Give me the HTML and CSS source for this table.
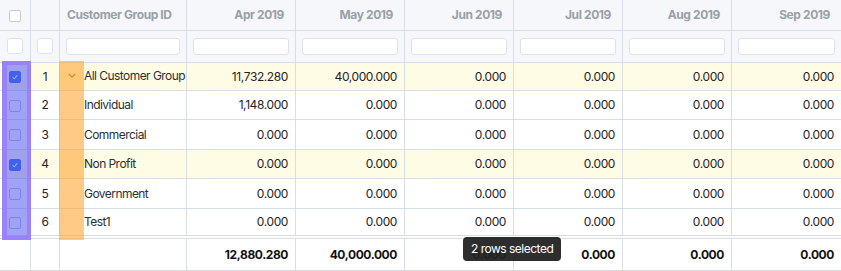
FILE: index.html
```html
<!DOCTYPE html>
<html>
<head>
<meta charset="utf-8">
<link rel="stylesheet" href="styles.css">
</head>
<body>
<div class="grid">
  <table class="tbl">
    <colgroup>
      <col class="c-sel"><col class="c-num"><col class="c-grp">
      <col class="c-m"><col class="c-m"><col class="c-m"><col class="c-m"><col class="c-m"><col class="c-last">
    </colgroup>
    <thead>
      <tr class="hdr">
        <th class="center"><span class="cb cb-hdr"></span></th>
        <th></th>
        <th class="left">Customer Group ID</th>
        <th>Apr 2019</th><th>May 2019</th><th>Jun 2019</th><th>Jul 2019</th><th>Aug 2019</th><th>Sep 2019</th>
      </tr>
      <tr class="flt">
        <th class="center"><span class="box"></span></th>
        <th class="center"><span class="box"></span></th>
        <th><span class="inp"></span></th>
        <th><span class="inp"></span></th><th><span class="inp"></span></th><th><span class="inp"></span></th><th><span class="inp"></span></th><th><span class="inp"></span></th><th><span class="inp"></span></th>
      </tr>
    </thead>
    <tbody>
      <tr class="sel r1">
        <td class="center"><span class="cb checked"><svg viewBox="0 0 10 10" width="8" height="8"><path d="M2 5.2 L4.2 7.2 L8 2.8" fill="none" stroke="#fff" stroke-width="1.4"/></svg></span></td>
        <td class="center">1</td>
        <td class="grp"><span class="tog"><svg viewBox="0 0 10 6" width="8" height="5"><path d="M1 1 L5 5 L9 1" fill="none" stroke="#b35f05" stroke-width="1.6"/></svg></span>All Customer Group</td>
        <td>11,732.280</td><td>40,000.000</td><td>0.000</td><td>0.000</td><td>0.000</td><td>0.000</td>
      </tr>
      <tr class="r2">
        <td class="center"><span class="cb"></span></td>
        <td class="center">2</td>
        <td class="grp"><span class="tog"></span>Individual</td>
        <td>1,148.000</td><td>0.000</td><td>0.000</td><td>0.000</td><td>0.000</td><td>0.000</td>
      </tr>
      <tr class="r3">
        <td class="center"><span class="cb"></span></td>
        <td class="center">3</td>
        <td class="grp"><span class="tog"></span>Commercial</td>
        <td>0.000</td><td>0.000</td><td>0.000</td><td>0.000</td><td>0.000</td><td>0.000</td>
      </tr>
      <tr class="sel r4">
        <td class="center"><span class="cb checked"><svg viewBox="0 0 10 10" width="8" height="8"><path d="M2 5.2 L4.2 7.2 L8 2.8" fill="none" stroke="#fff" stroke-width="1.4"/></svg></span></td>
        <td class="center">4</td>
        <td class="grp"><span class="tog"></span>Non Profit</td>
        <td>0.000</td><td>0.000</td><td>0.000</td><td>0.000</td><td>0.000</td><td>0.000</td>
      </tr>
      <tr class="r5">
        <td class="center"><span class="cb"></span></td>
        <td class="center">5</td>
        <td class="grp"><span class="tog"></span>Government</td>
        <td>0.000</td><td>0.000</td><td>0.000</td><td>0.000</td><td>0.000</td><td>0.000</td>
      </tr>
      <tr class="r6">
        <td class="center"><span class="cb"></span></td>
        <td class="center">6</td>
        <td class="grp"><span class="tog"></span>Test1</td>
        <td>0.000</td><td>0.000</td><td>0.000</td><td>0.000</td><td>0.000</td><td>0.000</td>
      </tr>
    </tbody>
    <tfoot>
      <tr class="ftr">
        <td></td><td></td><td></td>
        <td>12,880.280</td><td>40,000.000</td><td>0.000</td><td>0.000</td><td>0.000</td><td>0.000</td>
      </tr>
    </tfoot>
  </table>
  <div class="hl hl-sel"></div>
  <div class="hl hl-grp"></div>
  <div class="tip">2 rows selected</div>
</div>
</body>
</html>
```

FILE: styles.css
```css
html, body {
  margin: 0;
  padding: 0;
  background: #fff;
}
body {
  font-family: Inter, "Noto Sans", "Liberation Sans", sans-serif;
  font-size: 12px;
  letter-spacing: -0.4px;
  color: #1f2328;
}
.grid {
  position: relative;
  width: 841px;
  height: 271px;
  overflow: hidden;
}
.tbl {
  border-collapse: collapse;
  table-layout: fixed;
  width: 842px;
  margin-left: -1px;
}
.c-sel { width: 31px; }
.c-num { width: 29px; }
.c-grp { width: 127px; }
.c-m { width: 109px; }
.c-last { width: 110px; }

th, td {
  border: 1px solid #d8dee6;
  padding: 0 7px 0 4px;
  text-align: right;
  white-space: nowrap;
  overflow: hidden;
  box-sizing: border-box;
}
.hdr th {
  height: 30px;
  border-top: none;
  background: #f5f7fa;
  color: #9aa0a8;
  font-weight: 700;
  font-size: 12px;
  padding-right: 11px;
}
.hdr th.left { text-align: left; padding-left: 7px; }
.flt th {
  height: 32px;
  background: #f5f7fa;
  padding: 0 6px;
}
.center { text-align: center; padding: 0; }
.hdr th.center, .flt th.center { padding: 0; text-align: center; }

.cb {
  display: inline-block;
  width: 10px;
  height: 10px;
  border: 1px solid #b9bfc8;
  border-radius: 2px;
  background: #fff;
  vertical-align: middle;
  position: relative;
  box-sizing: content-box;
}
.cb-hdr { border-color: #c4c9d0; }
.cb.checked {
  background: #2f6fe4;
  border-color: #2f6fe4;
}
.cb.checked svg { position: absolute; left: 1px; top: 1px; }

.box {
  display: inline-block;
  width: 14px;
  height: 14px;
  border: 1px solid #dde2e9;
  border-radius: 3px;
  background: #fff;
  vertical-align: middle;
}
.inp {
  display: block;
  height: 17px;
  box-sizing: border-box;
  border: 1px solid #dde2e9;
  border-radius: 3px;
  background: #fff;
}

tbody td { height: 29px; }
tbody tr.r1 td { height: 28px; }
tbody tr.r2 td { height: 29px; }
tbody tr.r3 td { height: 30px; }
tbody tr.r4 td { height: 29px; }
tbody tr.r5 td { height: 30px; }
tbody tr.r6 td { height: 29px; }
tbody tr.sel td { background: #fffce6; }
td.grp {
  text-align: left;
  padding-left: 0;
  padding-right: 0;
  color: #2c2f33;
  letter-spacing: -0.55px;
}
.tog {
  display: inline-block;
  width: 24px;
  text-align: center;
  vertical-align: middle;
}
.tog svg { display: inline-block; vertical-align: middle; margin-top: -4px; }
.ftr td {
  height: 33px;
  border-top: 4px double #d8dee6;
  font-weight: 700;
  color: #111;
}

.hl {
  position: absolute;
  pointer-events: none;
}
.hl-sel {
  left: 2px;
  top: 61px;
  width: 29px;
  height: 179px;
  box-sizing: border-box;
  border: 4px solid rgba(155, 128, 250, 0.95);
  border-left-width: 5px;
  background: rgba(80, 85, 240, 0.55);
}
.hl-grp {
  left: 59px;
  top: 61px;
  width: 25px;
  height: 179px;
  background: rgba(255, 160, 40, 0.56);
}
.tip {
  position: absolute;
  left: 463px;
  top: 237px;
  height: 24px;
  line-height: 24px;
  padding: 0 8px;
  background: rgba(35, 35, 35, 0.95);
  color: #fff;
  border-radius: 4px;
  font-size: 12px;
  letter-spacing: -0.5px;
}
```
